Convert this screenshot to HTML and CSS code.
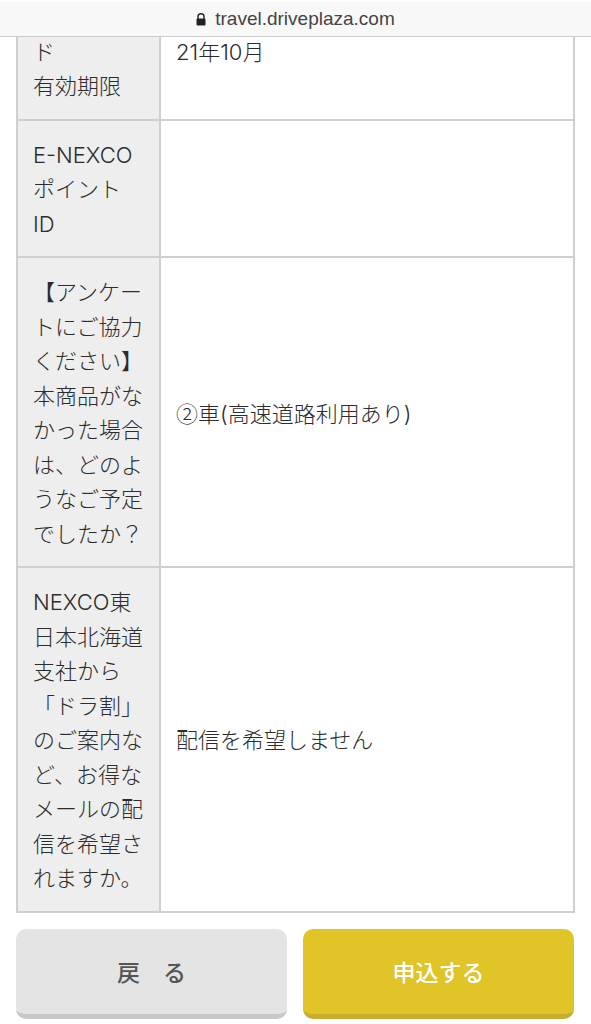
FILE: index.html
```html
<!DOCTYPE html>
<html lang="ja">
<head>
    <meta charset="UTF-8">
    <meta name="viewport" content="width=device-width, initial-scale=1.0">
    <title>travel.driveplaza.com</title>
    <link rel="stylesheet" href="styles.css">
</head>
<body>
    <div class="url-bar">
        <svg class="lock" width="10" height="13" viewBox="0 0 10 13">
            <path d="M2 6V3.8a3 3 0 0 1 6 0V6" fill="none" stroke="#222" stroke-width="1.4"/>
            <rect x="0.5" y="5.5" width="9" height="7" rx="1.2" fill="#222"/>
        </svg>
        <span>travel.driveplaza.com</span>
    </div>

    <div class="content">
        <table class="confirm">
            <tr>
                <th><br>ド<br>有効期限</th>
                <td>21年10月</td>
            </tr>
            <tr>
                <th>E-NEXCO<br>ポイント<br>ID</th>
                <td></td>
            </tr>
            <tr>
                <th>【アンケー<br>トにご協力<br>ください】<br>本商品がな<br>かった場合<br>は、どのよ<br>うなご予定<br>でしたか？</th>
                <td><span class="cjk">②</span>車(高速道路利用あり)</td>
            </tr>
            <tr>
                <th>NEXCO東<br>日本北海道<br>支社から<br>「ドラ割」<br>のご案内な<br>ど、お得な<br>メールの配<br>信を希望さ<br>れますか。</th>
                <td>配信を希望しません</td>
            </tr>
        </table>

        <div class="buttons">
            <a href="#" class="btn btn-back">戻　る</a>
            <a href="#" class="btn btn-submit">申込する</a>
        </div>
    </div>
</body>
</html>
```

FILE: styles.css
```css
html, body {
    margin: 0;
    padding: 0;
    height: 1024px;
    overflow: hidden;
    background: #fff;
}
body {
    font-family: Inter, "Noto Sans CJK JP", sans-serif;
    font-weight: 300;
    color: #2c2c2c;
}
.cjk {
    font-family: "Noto Sans CJK JP", sans-serif;
}
.url-bar {
    position: relative;
    z-index: 2;
    height: 34px;
    display: flex;
    align-items: center;
    justify-content: center;
    gap: 9px;
    background: #f8f8f8;
    border-top: 2px solid #fff;
    border-bottom: 1px solid #ccc;
    font-family: "Liberation Sans", sans-serif;
    font-size: 19px;
    font-weight: 400;
    color: #444;
}
.content {
    padding: 0 16px;
    margin-top: -56px;
}
.confirm {
    width: 559px;
    border-collapse: collapse;
    table-layout: fixed;
    font-size: 22px;
    line-height: 34.5px;
}
.confirm th,
.confirm td {
    border: 2px solid #cfcfcf;
    padding: 17px 15px 15px;
    text-align: left;
    font-weight: 300;
    vertical-align: middle;
}
.confirm th {
    width: 111px;
    background: #eee;
}
.buttons {
    display: flex;
    gap: 16px;
    margin-top: 16px;
    padding-right: 1px;
}
.btn {
    flex: 1;
    height: 85px;
    display: flex;
    align-items: center;
    justify-content: center;
    border-radius: 10px;
    font-size: 23px;
    font-weight: 500;
    text-decoration: none;
}
.btn-back {
    background: #e4e4e4;
    border-bottom: 5px solid #c8c8c8;
    color: #555;
}
.btn-submit {
    background: #e0c428;
    border-bottom: 5px solid #c9ad2c;
    color: #fff;
}
```
